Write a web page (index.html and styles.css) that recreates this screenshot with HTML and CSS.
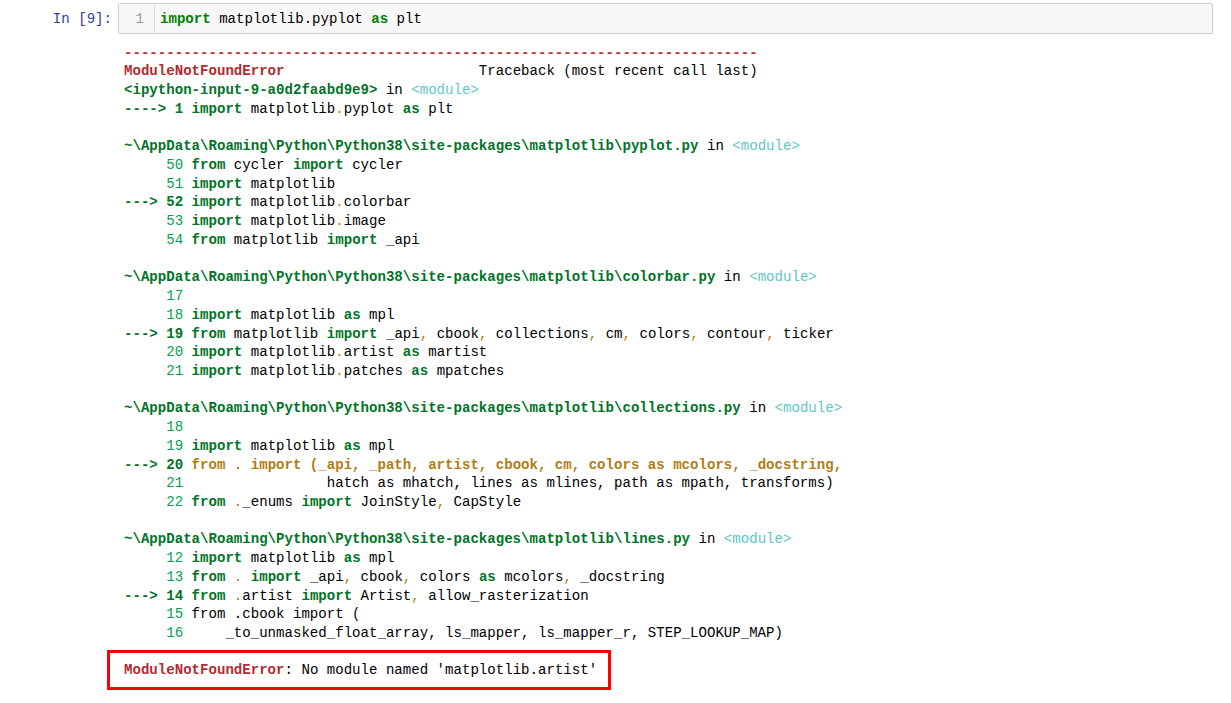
FILE: index.html
```html
<!DOCTYPE html>
<html>
  <head>
    <title>Notebook</title>
    <link rel="stylesheet" href="styles.css">
  </head>
  <body>
    <div class="notebook">
      <div class="cell">
        <div class="input-row">
          <div class="prompt">In [9]:</div>
          <div class="input-area">
            <div class="gutter">1</div>
            <div class="code"><span class="cm-kw">import</span> matplotlib.pyplot <span class="cm-kw">as</span> plt</div>
          </div>
        </div>

        <div class="output-row">
          <div class="out-prompt"></div>
          <div class="output-area">
<pre class="tb"><span class="dash">---------------------------------------------------------------------------</span>
<span class="err">ModuleNotFoundError</span>                       Traceback (most recent call last)
<span class="path">&lt;ipython-input-9-a0d2faabd9e9&gt;</span> in <span class="mod">&lt;module&gt;</span>
<span class="cur">----&gt; 1 </span><span class="kw">import</span> matplotlib<span class="p">.</span>pyplot <span class="kw">as</span> plt

<span class="path">~\AppData\Roaming\Python\Python38\site-packages\matplotlib\pyplot.py</span> in <span class="mod">&lt;module&gt;</span>
<span class="ln">     50</span> <span class="kw">from</span> cycler <span class="kw">import</span> cycler
<span class="ln">     51</span> <span class="kw">import</span> matplotlib
<span class="cur">---&gt; 52</span> <span class="kw">import</span> matplotlib<span class="p">.</span>colorbar
<span class="ln">     53</span> <span class="kw">import</span> matplotlib<span class="p">.</span>image
<span class="ln">     54</span> <span class="kw">from</span> matplotlib <span class="kw">import</span> _api

<span class="path">~\AppData\Roaming\Python\Python38\site-packages\matplotlib\colorbar.py</span> in <span class="mod">&lt;module&gt;</span>
<span class="ln">     17</span>
<span class="ln">     18</span> <span class="kw">import</span> matplotlib <span class="kw">as</span> mpl
<span class="cur">---&gt; 19</span> <span class="kw">from</span> matplotlib <span class="kw">import</span> _api<span class="p">,</span> cbook<span class="p">,</span> collections<span class="p">,</span> cm<span class="p">,</span> colors<span class="p">,</span> contour<span class="p">,</span> ticker
<span class="ln">     20</span> <span class="kw">import</span> matplotlib<span class="p">.</span>artist <span class="kw">as</span> martist
<span class="ln">     21</span> <span class="kw">import</span> matplotlib<span class="p">.</span>patches <span class="kw">as</span> mpatches

<span class="path">~\AppData\Roaming\Python\Python38\site-packages\matplotlib\collections.py</span> in <span class="mod">&lt;module&gt;</span>
<span class="ln">     18</span>
<span class="ln">     19</span> <span class="kw">import</span> matplotlib <span class="kw">as</span> mpl
<span class="cur">---&gt; 20</span> <span class="hl">from . import (_api, _path, artist, cbook, cm, colors as mcolors, _docstring,</span>
<span class="ln">     21</span>                 hatch as mhatch, lines as mlines, path as mpath, transforms)
<span class="ln">     22</span> <span class="kw">from</span> <span class="p">.</span>_enums <span class="kw">import</span> JoinStyle<span class="p">,</span> CapStyle

<span class="path">~\AppData\Roaming\Python\Python38\site-packages\matplotlib\lines.py</span> in <span class="mod">&lt;module&gt;</span>
<span class="ln">     12</span> <span class="kw">import</span> matplotlib <span class="kw">as</span> mpl
<span class="ln">     13</span> <span class="kw">from</span> <span class="p">.</span> <span class="kw">import</span> _api<span class="p">,</span> cbook<span class="p">,</span> colors <span class="kw">as</span> mcolors<span class="p">,</span> _docstring
<span class="cur">---&gt; 14</span> <span class="kw">from</span> <span class="p">.</span>artist <span class="kw">import</span> Artist<span class="p">,</span> allow_rasterization
<span class="ln">     15</span> from .cbook import (
<span class="ln">     16</span>     _to_unmasked_float_array, ls_mapper, ls_mapper_r, STEP_LOOKUP_MAP)</pre>
            <div class="error-box"><span class="err">ModuleNotFoundError</span>: No module named 'matplotlib.artist'</div>
          </div>
        </div>
      </div>
    </div>
  </body>
</html>
```

FILE: styles.css
```css
:root {
  --mono: "Liberation Mono", "DejaVu Sans Mono", monospace;
  --green: #007427;
  --green-light: #00a250;
  --red: #b22b31;
  --yellow: #b27d12;
  --cyan: #60c6c8;
  --prompt-width: 118px;
}

body {
  margin: 0;
  padding: 0;
  background-color: #fff;
  color: #000;
  font-family: var(--mono);
  font-size: 14.08px;
  line-height: 18.72px;
}

.notebook {
  padding: 3px 18px 0 0;
}

.input-row,
.output-row {
  display: flex;
}

.prompt,
.out-prompt {
  width: var(--prompt-width);
  flex-shrink: 0;
  box-sizing: border-box;
  text-align: right;
  padding-right: 6px;
}

.prompt {
  color: #303f9f;
  padding-top: 7px;
}

.input-area {
  flex: 1;
  display: flex;
  border: 1px solid #cfcfcf;
  border-radius: 2px;
  background-color: #f7f7f7;
}

.gutter {
  width: 36px;
  box-sizing: border-box;
  padding: 6px 10px 4px 0;
  text-align: right;
  color: #999;
  border-right: 1px solid #ddd;
}

.code {
  padding: 6px 5px 4px 5px;
}

.cm-kw {
  color: #008000;
  font-weight: bold;
}

.output-row {
  margin-top: 10px;
}

.output-area {
  flex: 1;
  padding-left: 6px;
}

.tb {
  margin: 0;
  font-family: inherit;
  font-size: inherit;
  line-height: inherit;
  white-space: pre;
}

.dash {
  color: #c0302f;
  font-weight: bold;
}

.err {
  color: var(--red);
  font-weight: bold;
}

.path,
.kw,
.cur {
  color: var(--green);
  font-weight: bold;
}

.ln {
  color: var(--green-light);
}

.mod {
  color: var(--cyan);
}

.p {
  color: var(--yellow);
}

.hl {
  color: var(--yellow);
  font-weight: bold;
}

.error-box {
  display: inline-block;
  margin: 7px 0 0 -17px;
  padding: 8px 11px 8px 14px;
  border: 3px solid #f00;
  white-space: pre;
}
```
